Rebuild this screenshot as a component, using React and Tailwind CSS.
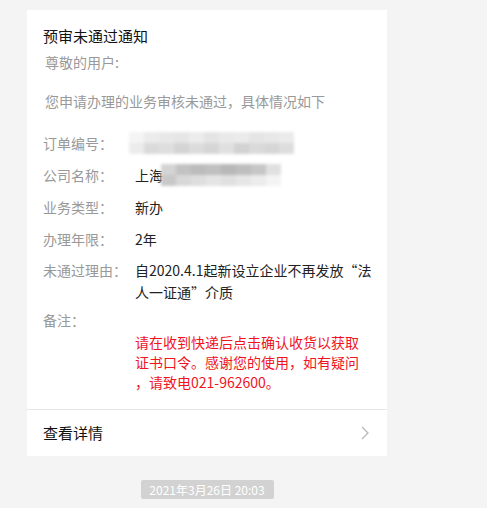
import React from 'react';

const font = { fontFamily: '"Noto Sans CJK SC", "Noto Sans", sans-serif' };

function Row({ label, children, className = '' }) {
  return (
    <div className={`flex text-[14px] leading-[20px] ${className}`}>
      <div className="w-[92px] shrink-0 text-[#999]">{label}</div>
      <div className="text-[#222] whitespace-nowrap">{children}</div>
    </div>
  );
}

function Mosaic({ cells, className }) {
  return (
    <div className={`flex flex-col blur-[1.5px] ${className}`}>
      {cells.map((row, i) => (
        <div key={i} className="flex h-[11px]">
          {row.map((c, j) => (
            <div key={j} className="w-[15px] h-full" style={{ background: c }} />
          ))}
        </div>
      ))}
    </div>
  );
}

export default function App() {
  const orderCells = [
    ['#f4f4f4', '#ececec', '#e8e8e8', '#e6e6e6', '#ececec', '#e4e4e4', '#e9e9e9', '#ebebeb', '#e5e5e5', '#e8e8e8', '#ebebeb'],
    ['#ececec', '#dadada', '#dedede', '#d4d4d4', '#dcdcdc', '#d6d6d6', '#e0e0e0', '#d2d2d2', '#dadada', '#d6d6d6', '#dddddd'],
  ];
  const companyCells = [
    ['#d4d4d4', '#c2c2c2', '#bcbcbc', '#c0c0c0', '#b8b8b8', '#bebebe', '#c6c6c6', '#e0e0e0'],
    ['#c8c8c8', '#d8d8d8', '#dedede', '#e4e4e4', '#e0e0e0', '#e6e6e6', '#ececec', '#f4f4f4'],
  ];

  return (
    <div className="min-h-[508px] w-[487px] bg-[#f4f4f4] pt-[10px]" style={font}>
      <div className="ml-[27px] w-[360px] bg-white">
        <div className="px-[16px] pt-[16px] pb-[17px]">
          <div className="text-[15px] leading-[20px] text-[#111]">预审未通过通知</div>
          <div className="mt-[6px] ml-[2px] text-[14px] leading-[20px] text-[#999]">尊敬的用户:</div>
          <div className="mt-[19px] ml-[2px] text-[14px] leading-[20px] text-[#999]">
            您申请办理的业务审核未通过，具体情况如下
          </div>

          <Row label="订单编号：" className="mt-[22px] h-[20px]">
            <Mosaic cells={orderCells} className="-ml-[6px] mt-[-1px]" />
          </Row>
          <Row label="公司名称：" className="mt-[12px] h-[20px]">
            <div className="flex items-start">
              <span>上海</span>
              <Mosaic cells={companyCells} className="ml-[-2px] mt-[-1px]" />
            </div>
          </Row>
          <Row label="业务类型：" className="mt-[12px]">新办</Row>
          <Row label="办理年限：" className="mt-[12px]">2年</Row>
          <Row label="未通过理由：" className="mt-[10px] leading-[22px]">
            自2020.4.1起新设立企业不再发放“法
            <br />
            人一证通”介质
          </Row>
          <Row label="备注：" className="mt-[7px] h-[20px]" />
          <div className="mt-[2px] pl-[92px] text-[14px] leading-[20px] text-[#f0141e] whitespace-nowrap">
            请在收到快递后点击确认收货以获取
            <br />
            证书口令。感谢您的使用，如有疑问
            <br />
            ，请致电021-962600。
          </div>
        </div>
        <div className="h-px bg-[#e6e6e6]" />
        <div className="flex h-[46px] items-center justify-between px-[16px]">
          <span className="text-[15px] text-[#111]">查看详情</span>
          <svg width="8" height="14" viewBox="0 0 8 14" className="mr-[2px]">
            <path d="M1 1 L7 7 L1 13" fill="none" stroke="#b8b8b8" strokeWidth="1.3" />
          </svg>
        </div>
      </div>
      <div className="mt-[24px] flex w-[414px] justify-center">
        <div className="flex h-[19px] w-[133px] items-center justify-center rounded-[2px] bg-[#d2d2d2] text-[12px] text-white">
          2021年3月26日 20:03
        </div>
      </div>
    </div>
  );
}
